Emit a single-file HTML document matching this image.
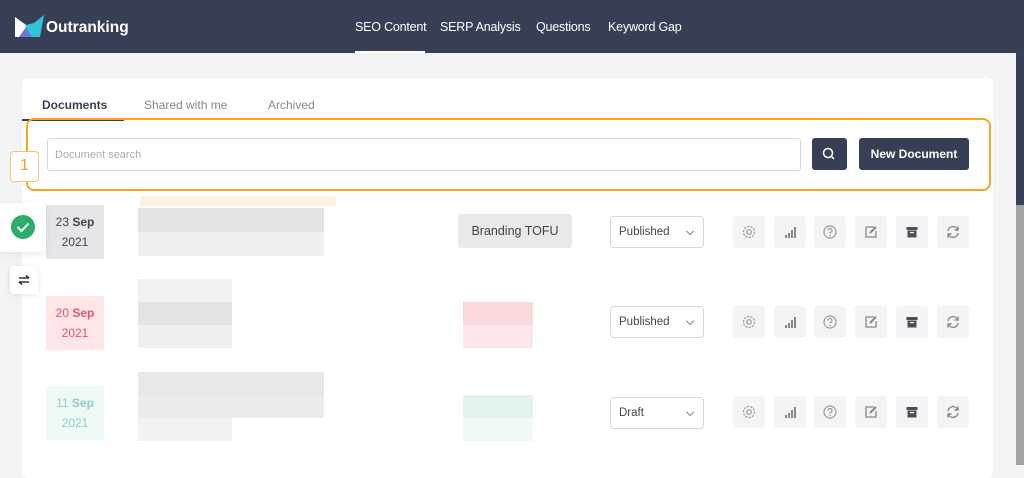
<!DOCTYPE html>
<html><head><meta charset="utf-8"><style>
*{box-sizing:border-box;margin:0;padding:0}
body{width:1024px;height:465px;overflow:hidden;background:#f3f4f6;font-family:"Liberation Sans",sans-serif;position:relative}
.a{position:absolute}
.hdr{left:0;top:0;width:1024px;height:53px;background:#363f55}
.nav{top:20px;color:#fff;font-size:12.5px;letter-spacing:-0.2px}
.card{left:22px;top:78px;width:971px;height:400px;background:#fff;border-radius:6px}
.tab{top:98px;font-size:12px;font-weight:bold;color:#8a8d96}
.ib{width:32px;height:32px;background:#f3f4f6;border-radius:3px;display:flex;align-items:center;justify-content:center}
.date{left:46px;width:58px;height:54px;text-align:center;font-size:12px;line-height:20px;padding-top:7px}
.sel{left:610px;width:94px;height:32px;border:1px solid #d6d8dc;border-radius:4px;font-size:11.5px;color:#444;padding:9px 0 0 8px}
.sel:after{content:"";position:absolute;right:10px;top:11px;width:5px;height:5px;border-right:1.3px solid #888;border-bottom:1.3px solid #888;transform:rotate(45deg)}
</style></head><body>
<div class="a hdr"></div>
<svg class="a" style="left:14px;top:15px" width="32" height="24" viewBox="0 0 32 24"><path d="M1 2 L12 10 L20 8 L30 0 L26 22 L4 22 Z" fill="#2ec4d6"/><path d="M1 2 L12 10 L9 22 L1 22Z" fill="#fff"/><path d="M5 22 L12 12 L18 22Z" fill="#6b78d9"/></svg>
<div class="a" style="left:46px;top:19px;color:#fff;font-weight:bold;font-size:15.5px">Outranking</div>
<div class="a nav" style="left:355px">SEO Content</div>
<div class="a" style="left:355px;top:51px;width:70px;height:2px;background:#fff"></div>
<div class="a nav" style="left:440px">SERP Analysis</div>
<div class="a nav" style="left:536px">Questions</div>
<div class="a nav" style="left:608px">Keyword Gap</div>
<div class="a" style="left:1016px;top:53px;width:8px;height:152px;background:#3a4157"></div>
<div class="a" style="left:1016px;top:205px;width:8px;height:260px;background:#a3a3a3"></div>
<div class="a card"></div>
<div class="a tab" style="left:42px;color:#3a4157">Documents</div>
<div class="a tab" style="left:144px;font-weight:normal;color:#888">Shared with me</div>
<div class="a tab" style="left:268px;font-weight:normal;color:#888">Archived</div>
<div class="a" style="left:22px;top:119px;width:102px;height:2px;background:#3a4157"></div>
<div class="a" style="left:26px;top:118px;width:965px;height:73px;border:2px solid #f5a623;border-radius:8px"></div>
<div class="a" style="left:47px;top:138px;width:754px;height:33px;border:1px solid #d9dbdf;border-radius:3px;font-size:11px;color:#aaa;padding:10px 0 0 7px">Document search</div>
<div class="a" style="left:812px;top:138px;width:35px;height:32px;background:#363f55;border-radius:3px"><svg width="35" height="32"><circle cx="16" cy="15" r="4.5" stroke="#fff" stroke-width="1.5" fill="none"/><path d="M19.5 18.5 L22 21" stroke="#fff" stroke-width="1.5"/></svg></div>
<div class="a" style="left:859px;top:138px;width:110px;height:32px;background:#363f55;border-radius:3px;color:#fff;font-weight:bold;font-size:12px;text-align:center;line-height:32px">New Document</div>
<div class="a" style="left:10px;top:151px;width:29px;height:31px;background:#fff;border:1.5px solid #f5c46a;border-radius:4px;color:#f0a020;font-size:16px;text-align:center;line-height:28px">1</div>
<div class="a" style="left:140px;top:196px;width:196px;height:10px;background:#fdf3e1"></div>

<div class="a date" style="top:205px;background:#e5e6e9;color:#444">23 <b>Sep</b><br>2021</div>
<div class="a" style="left:138px;top:208px;width:186px;height:24px;background:#e3e4e6"></div>
<div class="a" style="left:138px;top:232px;width:186px;height:24px;background:#eeeff0"></div>
<div class="a" style="left:458px;top:214px;width:114px;height:34px;background:#e8e9eb;border-radius:3px;font-size:12.5px;color:#444;text-align:center;line-height:34px">Branding TOFU</div>
<div class="a sel" style="top:216px">Published</div>
<div class="a date" style="top:296px;background:#fde5e8;color:#e0566a">20 <b>Sep</b><br>2021</div>
<div class="a" style="left:138px;top:279px;width:94px;height:23px;background:#f1f1f2"></div>
<div class="a" style="left:138px;top:302px;width:94px;height:23px;background:#e2e3e5"></div>
<div class="a" style="left:138px;top:325px;width:94px;height:23px;background:#eeeff0"></div>
<div class="a" style="left:463px;top:302px;width:70px;height:23px;background:#fbd8dc"></div>
<div class="a" style="left:463px;top:325px;width:70px;height:23px;background:#fde7ea"></div>
<div class="a sel" style="top:306px">Published</div>
<div class="a date" style="top:386px;background:#eef9f6;color:#8fcfbf">11 <b>Sep</b><br>2021</div>
<div class="a" style="left:138px;top:372px;width:186px;height:23px;background:#e6e7e8"></div>
<div class="a" style="left:138px;top:395px;width:186px;height:23px;background:#ececed"></div>
<div class="a" style="left:138px;top:418px;width:94px;height:23px;background:#f2f2f3"></div>
<div class="a" style="left:463px;top:395px;width:70px;height:23px;background:#e2f3ee"></div>
<div class="a" style="left:463px;top:418px;width:70px;height:23px;background:#f0f9f7"></div>
<div class="a sel" style="top:397px">Draft</div>

<div class="a" style="left:0;top:203px;width:46px;height:49px;background:#fff;border-radius:0 5px 5px 0;box-shadow:0 2px 8px rgba(0,0,0,.08)"></div>
<div class="a" style="left:11px;top:215px;width:24px;height:24px;border-radius:50%;background:#2eac6a"><svg width="24" height="24"><path d="M6.5 12 L10.5 16 L17.5 8.5" stroke="#fff" stroke-width="2" fill="none"/></svg></div>
<div class="a" style="left:10px;top:266px;width:28px;height:28px;background:#fff;border-radius:4px;box-shadow:0 1px 6px rgba(0,0,0,.1)"><svg width="28" height="28"><path d="M9 12 H19 M16 9.5 L19 12" stroke="#333" stroke-width="1.6" fill="none"/><path d="M19 16 H9 M12 18.5 L9 16" stroke="#333" stroke-width="1.6" fill="none"/></svg></div>

<div id="icons"></div>
<script>
var xs=[733,774,814,855,896,937],ys=[216,306,396];
var svgs=[
'<svg width="16" height="16" viewBox="0 0 16 16"><circle cx="8" cy="8" r="2.3" fill="none" stroke="#999" stroke-width="1.2"/><circle cx="8" cy="8" r="5.5" fill="none" stroke="#999" stroke-width="1.2" stroke-dasharray="2.2 1.2"/></svg>',
'<svg width="16" height="16"><rect x="3" y="11" width="2" height="3" fill="#888"/><rect x="6" y="9" width="2" height="5" fill="#888"/><rect x="9" y="6" width="2" height="8" fill="#888"/><rect x="12" y="3" width="2" height="11" fill="#888"/></svg>',
'<svg width="16" height="16"><circle cx="8" cy="8" r="6" fill="none" stroke="#999" stroke-width="1.2"/><path d="M6 6.5 A2 2 0 1 1 8 8.5 V9.5" fill="none" stroke="#999" stroke-width="1.2"/><circle cx="8" cy="11.5" r=".8" fill="#999"/></svg>',
'<svg width="16" height="16"><path d="M11 3 H3 V13 H13 V7" fill="none" stroke="#888" stroke-width="1.3"/><path d="M7 9 L13 3" stroke="#888" stroke-width="2"/></svg>',
'<svg width="16" height="16"><rect x="2.5" y="3" width="11" height="3" fill="#4d4f55"/><rect x="3.5" y="6.5" width="9" height="7" fill="#4d4f55"/><rect x="6" y="8" width="4" height="1.2" fill="#f3f4f6"/></svg>',
'<svg width="16" height="16"><path d="M3 7 A5 5 0 0 1 12.5 5.5 M13 9 A5 5 0 0 1 3.5 10.5" fill="none" stroke="#888" stroke-width="1.4"/><path d="M13 2.5 V6 H9.5 M3 13.5 V10 H6.5" fill="none" stroke="#888" stroke-width="1.4"/></svg>'];
var h='';ys.forEach(function(y){xs.forEach(function(x,i){h+='<div class="a ib" style="left:'+x+'px;top:'+y+'px">'+svgs[i]+'</div>';});});
document.getElementById('icons').innerHTML=h;
</script>
</body></html>
